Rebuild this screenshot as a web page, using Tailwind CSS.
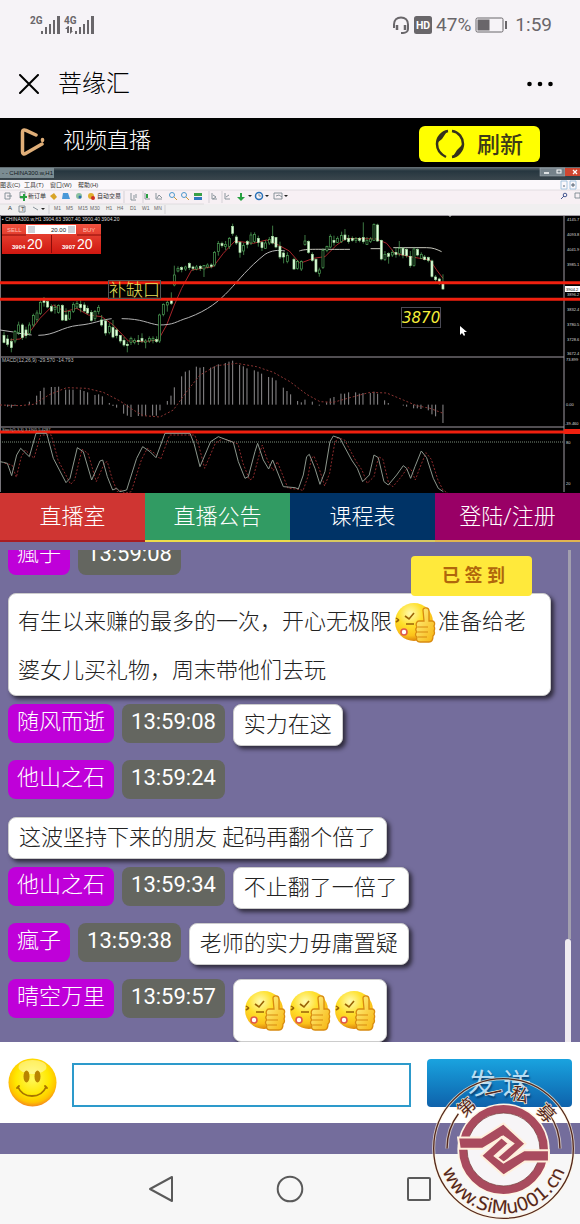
<!DOCTYPE html>
<html lang="zh-CN">
<head>
    <meta charset="UTF-8">
    <meta name="viewport" content="width=device-width, initial-scale=1.0">
    <title>菩缘汇</title>
    <script src="https://cdn.jsdelivr.net/npm/@tailwindcss/browser@4"></script>
</head>
<body class="h-screen flex flex-col overflow-hidden bg-[#746d9c] font-[Roboto,'Noto_Sans_CJK_SC',sans-serif] text-[22px]">

    <!-- gráficos compartidos -->
    <svg class="absolute w-0 h-0">
        <defs>
            <radialGradient id="cara" cx="40%" cy="28%" r="72%">
                <stop offset="0" stop-color="#fffbb0"/>
                <stop offset="0.45" stop-color="#ffe02c"/>
                <stop offset="0.8" stop-color="#fbc21a"/>
                <stop offset="1" stop-color="#dd860c"/>
            </radialGradient>
            <linearGradient id="mano" x1="0" y1="0" x2="1" y2="1">
                <stop offset="0" stop-color="#fff58a"/>
                <stop offset="1" stop-color="#f6b30c"/>
            </linearGradient>
        </defs>
        <symbol id="pulgar" viewBox="0 0 42 42">
            <circle cx="20" cy="20" r="19" fill="url(#cara)"/>
            <path d="M11 14l4 3 5-6M2 20l3-2M12 22h8" fill="none" stroke="#9a6206" stroke-width="1.6"/>
            <path d="M2 16l3 2" stroke="#9a6206" stroke-width="1.3"/>
            <circle cx="10" cy="30" r="3" fill="#fff" stroke="#e0584a" stroke-width="1.6"/>
            <path d="M29 8c0-3 6-3 6 1v10h3c3 0 3 3 2 5 1 2 1 3 0 5 1 2 0 4-1 5 0 4-1 6-4 6H26c-3 0-4-2-3-5-2-1-2-4 0-5-2-2-1-4 0-5-2-3 0-6 2-6h5z" fill="url(#mano)" stroke="#d88a10" stroke-width="1.3"/>
            <path d="M24 25h10M24 30h10M24 35h9" fill="none" stroke="#d88a10" stroke-width="1.2"/>
        </symbol>
    </svg>

    <!-- barra de estado -->
    <div class="shrink-0 h-[50px] flex items-center px-7 bg-[#f6f3f7] text-[#69666a]">
        <svg class="w-[68px] h-5" viewBox="0 0 68 20" fill="#69666a">
            <text x="2" y="9" font-size="10" font-weight="700" font-family="Roboto">2G</text>
            <path d="M13 16h2v3h-2zM17 12h2v7h-2zM21 9h2v10h-2zM25 5h2v14h-2zM29 1h3v18h-3z"/>
            <text x="36" y="9" font-size="10" font-weight="700" font-family="Roboto">4G</text>
            <path d="M47 16h2v3h-2zM51 12h2v7h-2zM55 9h2v10h-2zM59 5h2v14h-2zM63 1h3v18h-3zM40 11l-3 3h2v4h2v-7zM42 12v7l3-3h-1v-4z"/>
        </svg>
        <div class="ml-auto flex items-center gap-1 text-[19px]">
            <svg class="w-[18px] h-[18px]" viewBox="0 0 18 18" fill="none" stroke="#69666a" stroke-width="2">
                <path d="M2 12V8.500C2 4 5 1.500 9 1.500S16 4 16 8.500V13c0 2-2 4-5 4H9"/>
                <path d="M5 9v5M13 9v5" stroke-width="2.500"/>
            </svg>
            <svg class="w-[18px] h-[18px]" viewBox="0 0 18 18">
                <rect width="18" height="18" rx="2.500" fill="#69666a"/>
                <text x="9" y="13" text-anchor="middle" font-size="10.500" font-weight="700" fill="#fff" font-family="Roboto">HD</text>
            </svg>
            <span>47%</span>
            <svg class="w-8 h-4" viewBox="0 0 32 16">
                <rect x="1" y="1" width="27" height="14" rx="1.500" fill="none" stroke="#69666a"/>
                <rect x="2.500" y="2.500" width="12" height="11" fill="#69666a"/>
                <path d="M30 4h2v8h-2z" fill="#69666a"/>
            </svg>
            <span class="ml-1">1:59</span>
        </div>
    </div>

    <!-- título -->
    <header class="shrink-0 h-[68px] flex items-center px-[19px] bg-[#f6f3f7] text-black">
        <button aria-label="关闭">
            <svg class="w-5 h-5" viewBox="0 0 20 20" stroke="#000" stroke-width="2" stroke-linecap="round"><path d="M1 1l18 18M19 1L1 19"/></svg>
        </button>
        <h1 class="ml-[19px] text-2xl font-light">菩缘汇</h1>
        <button class="ml-auto mr-2" aria-label="更多">
            <svg class="w-[26px] h-5" viewBox="0 0 26 20"><circle cx="2.500" cy="10" r="2.300"/><circle cx="13" cy="10" r="2.300"/><circle cx="23.500" cy="10" r="2.300"/></svg>
        </button>
    </header>

    <div class="shrink-0 h-12 flex items-center pl-5 pr-10 bg-black text-white">
        <svg class="w-[26px] h-7" viewBox="0 0 26 28" fill="none" stroke="#dfae78" stroke-width="3.500" stroke-linecap="round" stroke-linejoin="round">
            <path d="M16 7L6 2.300C4 1.500 2.500 2 2.500 4v20c0 2 1.500 2.500 3 1.500L22 16M22.500 11.500v1"/>
        </svg>
        <h2 class="ml-[17px] pb-1 font-light">视频直播</h2>
        <button class="ml-auto mt-1 w-[121px] h-9 flex items-center gap-3 pl-4 rounded-md bg-[#ffff00] text-[#3d3a18]">
            <svg class="w-[30px] h-[30px]" viewBox="0 0 30 30" fill="none" stroke="#35321c" stroke-width="2.500">
                <path d="M11 28C5 25 2 20 2 15 2 8 7 3 13 2"/>
                <path d="M17 2c7 1 11 7 11 13 0 6-5 12-11 13"/>
                <path d="M13 1L4 8l-2 6 5-4zM17 29l9-7 2-7-6 6z" fill="#35321c" stroke="none"/>
            </svg>
            <span class="pt-1 text-[23px] font-medium">刷新</span>
        </button>
    </div>

    <!-- video: pantalla del terminal -->
    <svg class="shrink-0 w-full block bg-black" viewBox="0 166 580 327" font-family="Liberation Sans, Noto Sans CJK SC, sans-serif">
        <defs>
            <linearGradient id="ventana" x1="0" y1="0" x2="0" y2="1"><stop offset="0" stop-color="#6a7478"/><stop offset="0.3" stop-color="#26363f"/><stop offset="1" stop-color="#3a464d"/></linearGradient>
            <linearGradient id="rojo" x1="0" y1="0" x2="0" y2="1"><stop offset="0" stop-color="#f0523f"/><stop offset="1" stop-color="#cf1710"/></linearGradient>
            <polyline id="estocastico" points="0,320 10,322 22,325 35,362 50,300 62,280 88,305 108,235 140,235 160,310 198,383 210,370 232,278 250,290 275,375 300,318 308,315 322,365 338,405 350,400 360,410 380,405 410,310 428,275 450,290 468,308 495,235 570,235 582,265 600,335 632,260 655,245 700,262 715,320 735,370 745,365 765,290 773,265 790,315 806,342 818,315 850,395 885,398 895,402 910,360 920,305 928,298 945,340 960,388 975,350 990,260 1000,243 1020,250 1055,315 1072,340 1088,380 1108,360 1122,300 1135,308 1152,380 1165,390 1190,360 1210,332 1220,340 1232,370 1245,335 1264,288 1280,308 1300,370 1315,400 1330,410"/>
        </defs>
        <rect y="167" width="580" height="13" fill="url(#ventana)"/>
        <rect y="168" width="54" height="10" fill="#7b8c92"/>
        <text x="2" y="175" font-size="6" fill="#101820">- - CHINA300.w,H1</text>
        <rect x="540" y="168" width="25" height="8" fill="#75828a" stroke="#aab4ba" stroke-width="0.500"/>
        <rect x="565" y="168" width="15" height="8" fill="#cf4630"/>
        <path d="M544 173h5" stroke="#fff" stroke-width="1.500"/>
        <rect x="557" y="170" width="4" height="3" fill="none" stroke="#fff"/>
        <path d="M573 170l4 4M577 170l-4 4" stroke="#fff" stroke-width="1.300"/>

        <rect y="180" width="580" height="10" fill="#fbf8fb"/>
        <rect y="190" width="580" height="14" fill="#f7f0f4"/>
        <rect y="204" width="580" height="11" fill="#f0eff0"/>
        <path d="M0 190h580M0 204h204" stroke="#d4d0d4" stroke-width="0.600"/>
        <g font-size="6" fill="#333">
            <text x="0" y="187">图表(C)</text>
            <text x="24" y="187">工具(T)</text>
            <text x="50" y="187">窗口(W)</text>
            <text x="78" y="187">帮助(H)</text>
            <text x="28" y="198">新订单</text>
            <text x="97" y="198">自动交易</text>
            <text x="8" y="210">A</text>
            <text x="21" y="211">T</text>
        </g>
        <g font-size="5" fill="#666">
            <text x="54" y="210">M1</text><text x="66" y="210">M5</text><text x="78" y="210">M15</text><text x="90" y="210">M30</text><text x="106" y="210">H1</text><text x="117" y="210">H4</text><text x="130" y="210">D1</text><text x="142" y="210">W1</text><text x="154" y="210">MN</text>
        </g>
        <g fill="none" stroke="#7c8890" stroke-width="0.900">
            <path d="M5 193h5v6H5zM7 196h5M20 192v6h5v-6z"/>
            <path d="M131 193v7h5M134 195v4M136 194v4M145 193v6h5M156 193v6h6M157 198l2-3 3 3M212 193v6h5M225 193v6h5M213 195l3 2-3 2M229 195l-3 2M19 206h6v6h-6zM33 207l5 3"/>
            <path d="M124 191v12M143 191v12M209 191v12M222 191v12M49 205v9M165 205v9" stroke="#c4c4c8" stroke-width="0.700"/>
            <path d="M561 181h6v8h-6zM570 181h6v8h-6z" stroke="#9cc0dc"/>
            <path d="M563 186h2M572 184h2v2h-2z" stroke="#456"/>
            <path d="M274 193h8v6h-8zM276 196l3-1 3 2M575 193h5v5h-5z"/>
            <circle cx="172" cy="195" r="2.500" stroke="#3a8fc8"/><path d="M174 197l3 3" stroke="#c89020"/>
            <circle cx="184" cy="195" r="2.500" stroke="#3a8fc8"/><path d="M186 197l3 3" stroke="#c89020"/>
            <circle cx="259" cy="196" r="3.500" stroke="#2870b8" stroke-width="1.500"/><path d="M259 194v2h2"/>
            <circle cx="565" cy="195" r="1.800" stroke="#334a88"/><path d="M564 196l-3 3" stroke="#334a88"/>
        </g>
        <path d="M20 196h3v-2h2v2h2v2h-2v3h-2v-3h-3zM240 193h2v4h3l-4 4-4-4h3zM146 194h2v4h-2z" fill="#28a040"/>
        <path d="M50 196l4-3 3 4-3 3z" fill="#d8a428"/><path d="M63 193h5l2 6h-8z" fill="#4a98d8"/>
        <circle cx="79" cy="196" r="3" fill="#8cc0a0"/><circle cx="80" cy="197" r="1.500" fill="#2c70b0"/>
        <circle cx="91" cy="196" r="3" fill="#e0b030"/><circle cx="93" cy="198" r="2" fill="#d03020"/>
        <path d="M194 193h8v3h-8z" fill="#39a048"/><path d="M194 197h8v3h-8z" fill="#3078c0"/>
        <path d="M41 208l2 2 2-2zM248 195l2 2 2-2zM265 195l2 2 2-2zM284 195l2 2 2-2z" fill="#222"/>

        <path d="M0 215.500h580M564 216v276M0 357h564M0 427h564" stroke="#a19ba3" fill="none"/>
        <path d="M0.500 215v277" stroke="#77747a"/>
        <path d="M448 215h4l-2 2z" fill="#ccc"/>
        <text x="2" y="221" font-size="5" fill="#ddd">▪ CHINA300.w,H1 3904.63 3907.40 3900.40 3904.20</text>

        <rect x="2" y="224" width="99" height="30" fill="url(#rojo)"/>
        <path d="M26 225h50v9H26z" fill="#fff"/><path d="M28 226h7v7h-7zM68 226h7v7h-7z" fill="#cfd2d8"/>
        <path d="M2 235h24M77 235h24M51.500 235v18" stroke="#8a0c08"/>
        <text x="7" y="232" font-size="6" fill="#ffc0b4">SELL</text>
        <text x="83" y="232" font-size="6" fill="#ffc0b4">BUY</text>
        <text x="51" y="232" font-size="6" fill="#222">20.00</text>
        <g fill="#fff"><text x="12" y="249" font-size="6" font-weight="700">3904</text><text x="27" y="249" font-size="14">20</text><text x="62" y="249" font-size="6" font-weight="700">3907</text><text x="77" y="249" font-size="14">20</text></g>

        <g transform="translate(0 215) scale(0.3333)" fill="none">
            <polyline stroke="#a8252a" stroke-width="3" points="30,375 60,372 90,350 120,310 160,270 195,290 230,280 265,300 305,305 340,330 385,378 430,380 475,375 500,330 523,270 545,220 575,165 640,155 670,115 705,78 760,85 800,75 835,90 868,108 900,145 940,130 975,125 1010,90 1040,70 1130,72 1160,85 1185,115 1230,125 1290,135 1310,165 1329,190"/>
            <path d="M0 345l40 6M50 354l45 6M115 361c50 0 70-25 120-30s60-15 100-20M365 311c60 0 80 15 110 19 50 0 50-10 90-22 120-45 130-110 230-190 20-12 40-14 60-10" stroke="#b4b4b4" stroke-width="3"/>
            <path d="M898 108c20-8 60-4 152-5M1112 101h30M1180 98h100c20 0 30 5 45 12" stroke="#c6c6bc" stroke-width="3"/>
            <g id="velas"></g>
        </g>

        <path d="M0 282.700h580M0 299.200h580M0 432h580" stroke="#f0200f" stroke-width="3"/>
        <rect x="108.500" y="280.500" width="52" height="18" fill="none" stroke="#555"/>
        <text x="109" y="296" font-size="17" fill="#e9e05a" font-family="Noto Sans CJK SC" font-weight="300">补缺口</text>
        <rect x="401.500" y="307.500" width="39" height="20" fill="none" stroke="#4a4a55"/>
        <text x="402" y="323" font-size="15" font-style="italic" fill="#f6ef3a" font-family="DejaVu Sans">3870</text>
        <path d="M460 326v9l2-2 2 3 1-1-1-3h3z" fill="#fff"/>

        <path d="M0 442h564" stroke="#7b8b7b" stroke-dasharray="1 1"/>
        <text x="2" y="362" font-size="5" fill="#bbb">MACD(12,26,9) -29.570 -14.793</text>
        <text x="2" y="431" font-size="4" fill="#bbb">Stoch(5,3,3) 3.1905 5.4287</text>
        <g transform="translate(0 355) scale(0.3333)" fill="none">
            <g id="macd" stroke="#8f8d8f" stroke-width="3"></g>
            <polyline points="0,150 60,152 100,148 150,118 200,98 260,100 310,112 360,138 400,165 430,182 480,186 520,165 560,110 600,60 650,32 710,25 770,35 820,52 870,80 920,118 960,140 1000,142 1050,128 1110,112 1160,114 1210,135 1250,152 1290,160 1330,175" stroke="#8a3432" stroke-width="3" stroke-dasharray="6 6"/>
            <use href="#estocastico" x="14" y="5" stroke="#8c2a2c" stroke-width="3" stroke-dasharray="6 5"/>
            <use href="#estocastico" stroke="#8d978d" stroke-width="3"/>
        </g>
        <g font-size="4" fill="#ddd">
            <text x="567" y="221">4145.7</text><text x="567" y="236">4093.8</text><text x="567" y="251">4041.9</text><text x="567" y="266">3985.1</text>
            <text x="567" y="296">3896.2</text><text x="567" y="311">3832.4</text><text x="567" y="326">3780.5</text><text x="567" y="341">3728.6</text><text x="567" y="355">3672.4</text>
            <text x="566" y="361">73.899</text><text x="566" y="406">0.00</text><text x="565" y="425">-39.460</text><text x="566" y="444">80</text><text x="566" y="485">20</text>
        </g>
        <rect x="565" y="286" width="15" height="6" fill="#fff"/><text x="566" y="291" font-size="4">3904.2</text>
        <rect x="564" y="429" width="16" height="5" fill="#f0200f"/>
    </svg>

    <nav class="shrink-0 grid grid-cols-4 text-center text-white font-light leading-[47px]">
        <a href="#" class="bg-[#cf3532] border-b-2 border-[#a81e22]">直播室</a>
        <a href="#" class="bg-[#319b63] border-b-2 border-[#eedc4a]">直播公告</a>
        <a href="#" class="bg-[#003366] border-b-2 border-[#d8c860]">课程表</a>
        <a href="#" class="bg-[#990066] border-b-2 border-[#e0b450]">登陆/注册</a>
    </nav>

    <!-- chat -->
    <main class="relative flex-1 min-h-0 flex pt-2">
        <ul class="flex-1 min-w-0 flex flex-col justify-end overflow-hidden pl-2 pr-2 text-[#222]">
            <li class="shrink-0 flex flex-col items-start gap-[18px] mb-2">
                <div class="flex gap-2 text-white leading-9">
                    <span class="px-[9px] pb-[3px] rounded-lg bg-[#bf00d9] font-light">瘋子</span>
                    <span class="px-[9px] pb-[3px] rounded-lg bg-[#646660]">13:59:08</span>
                </div>
                <p class="w-full pt-[3px] px-[9px] rounded-lg border border-[#ccc] bg-white font-light leading-[49px] shadow-[3px_3px_4px_#2f2b3c]">有生以来赚的最多的一次，开心无极限<svg class="inline-block w-[42px] h-[42px] mx-[2px] align-middle"><use href="#pulgar"/></svg>准备给老婆女儿买礼物，周末带他们去玩</p>
            </li>
            <li class="shrink-0 flex items-start gap-2 mb-[14px]">
                <span class="px-[9px] pb-[3px] rounded-lg bg-[#bf00d9] text-white font-light leading-9">随风而逝</span>
                <span class="px-[9px] pb-[3px] rounded-lg bg-[#646660] text-white leading-9">13:59:08</span>
                <p class="px-[10px] rounded-lg border border-[#ccc] bg-white font-light leading-10 shadow-[3px_3px_4px_#2f2b3c]">实力在这</p>
            </li>
            <li class="shrink-0 flex flex-col items-start gap-[18px] mb-2">
                <div class="flex gap-2 text-white leading-9">
                    <span class="px-[9px] pb-[3px] rounded-lg bg-[#bf00d9] font-light">他山之石</span>
                    <span class="px-[9px] pb-[3px] rounded-lg bg-[#646660]">13:59:24</span>
                </div>
                <p class="px-[10px] rounded-lg border border-[#ccc] bg-white font-light leading-10 shadow-[3px_3px_4px_#2f2b3c]">这波坚持下来的朋友 起码再翻个倍了</p>
            </li>
            <li class="shrink-0 flex items-start gap-2 mb-[14px]">
                <span class="px-[9px] pb-[3px] rounded-lg bg-[#bf00d9] text-white font-light leading-9">他山之石</span>
                <span class="px-[9px] pb-[3px] rounded-lg bg-[#646660] text-white leading-9">13:59:34</span>
                <p class="px-[10px] rounded-lg border border-[#ccc] bg-white font-light leading-10 shadow-[3px_3px_4px_#2f2b3c]">不止翻了一倍了</p>
            </li>
            <li class="shrink-0 flex items-start gap-2 mb-[14px]">
                <span class="px-[9px] pb-[3px] rounded-lg bg-[#bf00d9] text-white font-light leading-9">瘋子</span>
                <span class="px-[9px] pb-[3px] rounded-lg bg-[#646660] text-white leading-9">13:59:38</span>
                <p class="px-[10px] rounded-lg border border-[#ccc] bg-white font-light leading-10 shadow-[3px_3px_4px_#2f2b3c]">老师的实力毋庸置疑</p>
            </li>
            <li class="shrink-0 flex items-start gap-2">
                <span class="px-[9px] pb-[3px] rounded-lg bg-[#bf00d9] text-white font-light leading-9">晴空万里</span>
                <span class="px-[9px] pb-[3px] rounded-lg bg-[#646660] text-white leading-9">13:59:57</span>
                <p class="h-[63px] flex items-center gap-[3px] px-[10px] rounded-lg border border-[#ccc] bg-white shadow-[3px_3px_4px_#2f2b3c]">
                    <svg class="w-[42px] h-[42px]"><use href="#pulgar"/></svg>
                    <svg class="w-[42px] h-[42px]"><use href="#pulgar"/></svg>
                    <svg class="w-[42px] h-[42px]"><use href="#pulgar"/></svg>
                </p>
            </li>
        </ul>
        <!-- scroll -->
        <div class="w-[21px] shrink-0 flex flex-col items-end pr-[9px]">
            <div class="w-[3px] flex-1 bg-[#a29fae]"></div>
            <div class="w-[6px] h-[103px] rounded-t bg-[#efebf0]"></div>
        </div>
        <button class="absolute top-[14px] right-12 w-[121px] h-10 pl-1 rounded bg-[#ffe93b] text-[#b0660c] text-lg font-bold">已 签 到</button>
    </main>

    <form class="shrink-0 h-[81px] flex items-center px-2 bg-white">
        <button type="button" aria-label="表情">
            <svg class="w-[49px] h-[49px]" viewBox="0 0 49 49">
                <defs><radialGradient id="sol" cx="50%" cy="42%" r="58%"><stop offset="0" stop-color="#fff95a"/><stop offset="0.6" stop-color="#ffe800"/><stop offset="0.85" stop-color="#ffc400"/><stop offset="1" stop-color="#f58a1c"/></radialGradient></defs>
                <circle cx="24.500" cy="24.500" r="24" fill="url(#sol)"/>
                <ellipse cx="24.500" cy="9" rx="14" ry="7" fill="#fff" opacity="0.400"/>
                <ellipse cx="18.500" cy="18.500" rx="3" ry="6" fill="#b98400"/><ellipse cx="29.500" cy="18.500" rx="3" ry="6" fill="#b98400"/>
                <path d="M10 29c5 12 23 12 28 0M9 30l2-2M37 28l2 2" fill="none" stroke="#a87400" stroke-width="1.800" stroke-linecap="round"/>
            </svg>
        </button>
        <input type="text" aria-label="消息" class="flex-1 min-w-0 h-11 mt-1 ml-[15px] mr-4 px-2 border-2 border-[#2d9acb] bg-white outline-none">
        <button type="button" class="w-[145px] h-12 pt-1 rounded bg-linear-to-b from-[#1aa3df] to-[#0f62ab] text-[#b5dcf3] text-[28px] leading-11 [text-shadow:1px_2px_2px_#0a4070]">发 送</button>
    </form>
    <div class="shrink-0 h-[31px]"></div>

    <!-- navegación -->
    <div class="shrink-0 h-[70px] grid grid-cols-3 place-items-center px-24 bg-[#f7f7f7]">
        <button aria-label="返回"><svg class="w-7 h-7" viewBox="0 0 28 28" fill="none" stroke="#5a5a5a" stroke-width="2" stroke-linejoin="round"><path d="M25 2v24L3 14z"/></svg></button>
        <button aria-label="主页"><svg class="w-7 h-7" viewBox="0 0 28 28" fill="none" stroke="#5a5a5a" stroke-width="2"><circle cx="14" cy="14" r="12.300"/></svg></button>
        <button aria-label="最近"><svg class="w-7 h-7" viewBox="0 0 28 28" fill="none" stroke="#5a5a5a" stroke-width="2"><rect x="3" y="3" width="22" height="22" rx="1"/></svg></button>
    </div>

    <!-- sello -->
    <svg class="absolute right-[5px] bottom-1 w-[143px] h-[143px]" viewBox="66 111 428 428">
        <defs><path id="arco" d="M85 325a195 195 0 0 0 390 0"/></defs>
        <g fill="none">
            <circle cx="280" cy="325" r="209" stroke="#fff3dc" stroke-opacity="0.700" stroke-width="9"/>
            <circle cx="280" cy="325" r="209" stroke="#55281c" stroke-width="4"/>
            <path d="M111 325c0-40 12-75 34-104M415 220c21 28 34 62 34 105" stroke="#fff3dc" stroke-opacity="0.600" stroke-width="10"/>
            <path d="M111 325c0-40 12-75 34-104M415 220c21 28 34 62 34 105" stroke="#55281c" stroke-width="4"/>
        </g>
        <circle cx="280" cy="328" r="138" fill="#fff6e6"/>
        <circle cx="280" cy="328" r="108" fill="#f7f5f7"/>
        <circle cx="280" cy="328" r="121" fill="none" stroke="#a94b5e" stroke-width="24"/>
        <circle cx="280" cy="328" r="109" fill="none" stroke="#6d3a3e" stroke-width="2"/>
        <g fill="#a94b5e" stroke="#fff0dc" stroke-width="6" stroke-linejoin="miter">
            <path d="M144 292h69l67-42 66 61-69 62-20-18 52-45-30-21-62 37h-68z"/>
            <path d="M416 364h-72l-64 42-67-59 61-56 22 19-42 37 26 20 62-37h74z"/>
        </g>
        <g fill="#55281c" stroke="#fff0dc" stroke-width="4" paint-order="stroke" font-size="54" text-anchor="middle" font-family="Noto Sans CJK SC">
            <text transform="translate(182 216) rotate(-42)">第</text>
            <text transform="translate(254 178) rotate(-12)">一</text>
            <text transform="translate(324 182) rotate(16)">私</text>
            <text transform="translate(394 232) rotate(46)">募</text>
        </g>
        <text font-size="56" fill="#55281c" stroke="#fff0dc" stroke-width="3" paint-order="stroke" text-anchor="middle" font-family="DejaVu Sans"><textPath href="#arco" startOffset="50%">www.SiMu001.cn</textPath></text>
    </svg>

    <script>
        const NS = 'http://www.w3.org/2000/svg';

        // x, máximo, arriba, abajo, mínimo, llena
        const velas = [
            [12,350,362,382,385,1],[23,360,372,388,395,1],[34,370,380,398,412,1],[45,345,350,378,385,0],[56,320,330,352,360,0],[67,325,330,368,375,1],
            [78,335,345,362,370,1],[88,322,330,356,362,0],[100,296,302,330,336,0],[111,286,294,314,322,0],[121,250,262,296,300,0],[132,246,253,262,275,1],
            [143,255,260,276,280,1],[154,268,275,288,292,1],[165,268,278,284,296,0],[176,268,272,292,296,0],[187,268,272,315,318,1],[198,280,300,316,318,1],
            [209,288,290,312,315,0],[220,262,268,290,294,0],[231,258,266,276,282,0],[242,254,268,278,292,1],[253,262,270,288,290,1],[263,272,280,294,298,1],
            [274,285,292,316,320,1],[285,285,290,310,318,0],[296,270,278,290,298,0],[305,300,315,330,335,1],[317,312,318,354,362,1],[328,325,335,352,358,0],
            [339,315,338,366,370,1],[350,340,345,362,370,1],[361,360,362,378,385,1],[372,366,376,390,395,1],[382,380,388,392,412,1],[393,365,370,382,390,0],
            [404,370,376,382,388,0],[415,360,376,380,390,1],[426,355,370,378,384,1],[437,372,378,382,400,0],[448,364,370,378,384,0],[459,364,370,376,385,0],
            [470,364,374,380,384,1],[479,296,300,378,384,0],[490,265,268,298,304,0],[502,252,262,270,290,0],[514,232,250,265,270,1],[523,152,180,210,214,0],
            [534,154,160,168,172,0],[545,154,158,164,172,1],[557,152,156,162,168,0],[568,142,146,158,165,1],[579,152,156,160,168,1],[590,150,156,162,166,0],
            [601,150,154,160,168,1],[612,150,152,162,186,0],[623,145,150,156,160,0],[634,145,150,154,160,1],[644,108,112,150,155,0],[655,78,86,110,122,0],
            [666,80,86,92,98,1],[677,78,88,94,105,0],[688,66,70,94,102,0],[698,26,34,55,62,1],[709,60,66,84,90,1],[720,78,82,112,128,1],
            [731,84,92,108,120,0],[742,75,80,88,100,1],[753,52,60,84,90,0],[764,52,58,80,84,0],[775,62,70,82,95,1],[786,78,82,98,108,1],
            [797,76,84,100,102,0],[808,66,74,84,90,0],[818,32,64,84,88,1],[828,66,68,96,100,1],[840,80,94,126,132,1],[851,110,114,126,145,1],
            [862,112,122,140,145,0],[882,128,134,162,164,1],[893,135,140,160,164,0],[904,136,140,162,168,0],[915,60,78,88,92,0],[926,76,80,112,116,1],
            [937,112,118,136,140,1],[948,130,134,170,174,1],[958,158,165,175,185,0],[969,100,106,158,162,0],[981,92,94,106,112,0],[991,58,64,96,100,0],
            [1002,62,76,82,92,1],[1013,64,70,82,84,0],[1025,50,62,80,84,0],[1035,42,60,74,78,1],[1046,60,70,80,86,1],[1057,64,70,76,80,1],
            [1068,66,70,76,84,0],[1079,66,70,76,82,1],[1090,22,68,80,86,1],[1101,66,76,88,90,0],[1112,66,72,80,84,0],[1122,25,28,76,78,0],
            [1133,26,30,78,80,1],[1144,74,76,132,136,1],[1155,108,118,134,138,0],[1166,112,116,124,146,1],[1177,104,112,120,126,0],[1188,98,112,118,128,1],
            [1198,78,100,116,124,0],[1209,96,100,120,130,1],[1220,100,104,122,128,1],[1231,108,124,152,158,1],[1242,98,102,152,155,0],[1253,100,104,120,124,1],
            [1264,112,118,130,132,0],[1274,120,126,134,136,1],[1285,125,128,136,142,1],[1296,134,138,184,188,1],[1307,180,186,194,200,1],[1318,188,192,206,210,1],
            [1329,178,206,222,224,1]
        ];

        // x, extremo de la barra
        const macd = [
            [23,155],[34,158],[45,153],[88,140],[110,122],[121,108],[132,98],[154,96],[165,96],[176,95],[197,104],[208,104],[219,104],[241,104],[252,108],
            [263,112],[285,120],[296,118],[307,124],[328,144],[339,153],[350,158],[371,176],[382,182],[393,186],[415,183],[426,184],[437,182],[458,182],[469,182],
            [480,166],[502,138],[513,122],[523,97],[545,64],[556,50],[568,46],[589,35],[600,38],[611,36],[632,38],[643,34],[655,28],[676,24],[687,20],[698,17],
            [719,30],[730,34],[741,40],[763,46],[774,50],[785,56],[806,66],[817,68],[828,76],[850,98],[861,108],[872,118],[893,138],[904,142],[915,134],
            [937,140],[958,152],[980,142],[991,130],[1002,126],[1023,116],[1034,116],[1046,112],[1067,112],[1078,116],[1089,114],[1111,114],[1122,110],[1133,116],
            [1154,136],[1165,144],[1210,152],[1220,155],[1241,160],[1252,160],[1263,162],[1285,166],[1296,178],[1307,184],[1329,204]
        ];

        function dibujar(padre, tipo, atributos) {
            const el = document.createElementNS(NS, tipo);
            for (const k in atributos) el.setAttribute(k, atributos[k]);
            padre.appendChild(el);
        }

        const gVelas = document.getElementById('velas');
        velas.forEach(([x, max, arriba, abajo, min, llena]) => {
            dibujar(gVelas, 'path', { d: `M${x} ${max}V${min}`, stroke: '#5cb565', 'stroke-width': 2 });
            dibujar(gVelas, 'rect', { x: x - 3, y: arriba, width: 6, height: abajo - arriba, fill: llena ? '#e4ffe0' : '#000', stroke: llena ? '#a8e0a4' : '#4fa658', 'stroke-width': 2 });
        });

        const gMacd = document.getElementById('macd');
        macd.forEach(([x, y]) => dibujar(gMacd, 'path', { d: `M${x} 149V${y}` }));
    </script>
</body>
</html>
